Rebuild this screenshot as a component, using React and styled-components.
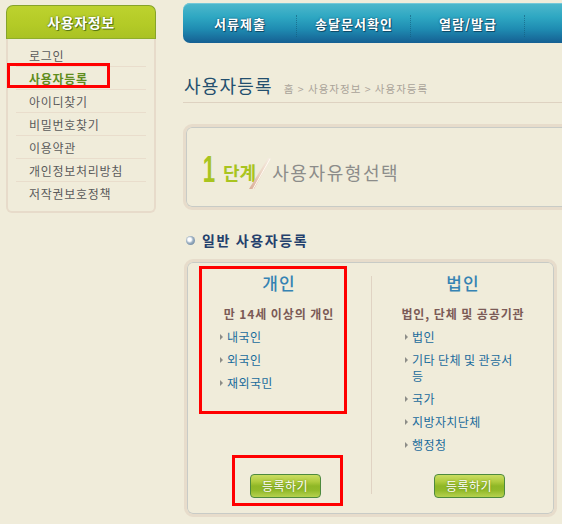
import React from "react";
import styled, { createGlobalStyle } from "styled-components";

const GlobalStyle = createGlobalStyle`
  html, body {
    margin: 0;
    padding: 0;
    background: #f0ecda;
    overflow: hidden;
  }
  body {
    font-family: "Noto Sans CJK KR", "Noto Sans", sans-serif;
    width: 562px;
    height: 524px;
  }
  ul {
    list-style: none;
    margin: 0;
    padding: 0;
  }
`;

const menu = [
  "로그인",
  "사용자등록",
  "아이디찾기",
  "비밀번호찾기",
  "이용약관",
  "개인정보처리방침",
  "저작권보호정책",
];

// the last tab runs past the right edge, only its separator shows
const tabs = ["서류제출", "송달문서확인", "열람/발급", ""];

const kinds = [
  {
    title: "개인",
    sub: "만 14세 이상의 개인",
    items: ["내국인", "외국인", "재외국민"],
    marked: true,
  },
  {
    title: "법인",
    sub: "법인, 단체 및 공공기관",
    items: ["법인", "기타 단체 및 관공서 등", "국가", "지방자치단체", "행정청"],
  },
];

const App = () => {
  return (
    <>
      <GlobalStyle />
      <Page>
        <Sidebar>
          <SideHeader>사용자정보</SideHeader>
          <SideBody>
            {menu.map((m) => (
              <SideItem key={m} $active={m === "사용자등록"}>
                {m}
                {m === "사용자등록" && (
                  <Mark $top={-4} $left={-9} $w={103} $h={25} />
                )}
              </SideItem>
            ))}
          </SideBody>
        </Sidebar>

        <Main>
          <Nav>
            {tabs.map((t, i) => (
              <Tab key={i}>{t}</Tab>
            ))}
          </Nav>

          <TitleRow>
            <Title>사용자등록</Title>
            <Crumb>홈 &gt; 사용자정보 &gt; 사용자등록</Crumb>
          </TitleRow>

          <StepBox>
            <StepNo>1</StepNo>
            <StepWord>단계</StepWord>
            <Slash width="24" height="34" viewBox="0 0 24 34">
              <defs>
                <linearGradient id="sl" x1="0" y1="1" x2="1" y2="0">
                  <stop offset="0" stopColor="#d9ad98" />
                  <stop offset="0.55" stopColor="#ecd6c6" />
                  <stop offset="1" stopColor="#f6efe4" />
                </linearGradient>
              </defs>
              <polygon points="1,33 20,2 23,2 6,33" fill="url(#sl)" />
              <line x1="5" y1="33" x2="22" y2="3" stroke="#fffaf2" strokeWidth="1" />
            </Slash>
            <StepText>사용자유형선택</StepText>
          </StepBox>

          <SectionHead>
            <Dot />
            일반 사용자등록
          </SectionHead>

          <Card>
            {kinds.map((k, i) => (
              <React.Fragment key={k.title}>
                {i > 0 && <Divider />}
                <Column>
                  <KindTitle>{k.title}</KindTitle>
                  <KindSub>{k.sub}</KindSub>
                  <KindList>
                    {k.items.map((it) => (
                      <KindItem key={it}>
                        <span>{it}</span>
                      </KindItem>
                    ))}
                  </KindList>
                  <ButtonRow>
                    <RegButton>등록하기</RegButton>
                  </ButtonRow>
                  {k.marked && (
                    <>
                      <Mark $top={4} $left={12} $w={148} $h={148} />
                      <Mark $top={193} $left={45} $w={111} $h={51} />
                    </>
                  )}
                </Column>
              </React.Fragment>
            ))}
          </Card>
        </Main>
      </Page>
    </>
  );
};

export default App;

const Page = styled.div`
  display: flex;
  align-items: flex-start;
  padding: 3px 0 0 6px;
`;

const Sidebar = styled.div`
  width: 150px;
  margin-top: 2px;
  flex-shrink: 0;
`;

const SideHeader = styled.div`
  height: 34px;
  box-sizing: border-box;
  border: 1px solid #86a32a;
  border-bottom-color: #8fae2a;
  border-radius: 7px 7px 0 0;
  background: linear-gradient(#bdd22e, #b3ca26 60%, #aac224);
  color: #fff;
  font-size: 14px;
  font-weight: 700;
  letter-spacing: 0.6px;
  display: flex;
  align-items: center;
  justify-content: center;
  text-shadow: 0 0 2px #4d6a10, 1px 1px 0 #5f7e14;
`;

const SideBody = styled.ul`
  && {
    border: 2px solid #e7dbca;
    border-top: none;
    border-radius: 0 0 6px 6px;
    padding: 5px 8px 6px;
  }
`;

const SideItem = styled.li`
  position: relative;
  height: 23px;
  box-sizing: border-box;
  padding-left: 13px;
  border-bottom: 1px solid #e9ddcc;
  font-size: 12px;
  line-height: 23px;
  color: ${(p) => (p.$active ? "#5f8c1c" : "#5a5a5a")};
  font-weight: ${(p) => (p.$active ? 700 : 400)};
  letter-spacing: 0.7px;
  &:last-child {
    border-bottom: none;
  }
`;

const Mark = styled.div`
  position: absolute;
  top: ${(p) => p.$top}px;
  left: ${(p) => p.$left}px;
  width: ${(p) => p.$w}px;
  height: ${(p) => p.$h}px;
  box-sizing: border-box;
  border: 3px solid #ff0000;
  pointer-events: none;
`;

const Main = styled.div`
  margin-left: 27px;
  width: 400px;
  flex-shrink: 0;
  display: flex;
  flex-direction: column;
`;

const Nav = styled.div`
  height: 40px;
  display: flex;
  border-radius: 7px 0 0 7px;
  background: linear-gradient(#4fb8cc 0%, #2ea7c2 35%, #1f8cb2 65%, #155f92 100%);
  box-shadow: inset 0 1px 0 #74c8d8;
`;

const Tab = styled.div`
  width: 114px;
  flex-shrink: 0;
  display: flex;
  align-items: center;
  justify-content: center;
  color: #fff;
  font-size: 13px;
  font-weight: 700;
  letter-spacing: 1px;
  text-shadow: 0 0 2px #0c4764, 1px 1px 0 #12506e;
  position: relative;
  &:not(:last-child)::after {
    content: "";
    position: absolute;
    right: 0;
    top: 12px;
    bottom: 6px;
    border-right: 1px dotted rgba(20, 90, 120, 0.6);
  }
`;

const TitleRow = styled.div`
  margin-top: 29px;
  padding: 0 0 4px 1px;
  border-bottom: 1px solid #ded2c1;
  display: flex;
  align-items: baseline;
`;

const Title = styled.h1`
  margin: 0;
  font-size: 18px;
  line-height: 26px;
  font-weight: 400;
  color: #234f6e;
  letter-spacing: 1.2px;
`;

const Crumb = styled.span`
  margin-left: 11px;
  font-size: 10.5px;
  letter-spacing: 1px;
  color: #aaa399;
`;

const StepBox = styled.div`
  margin-top: 21px;
  height: 86px;
  box-sizing: border-box;
  border: 3px solid #e7dccb;
  border-radius: 9px;
  box-shadow: inset 0 0 0 1px #c8cbc6;
  display: flex;
  align-items: center;
  padding: 6px 0 0 13px;
`;

const StepNo = styled.span`
  font-family: "Liberation Sans", sans-serif;
  font-weight: 700;
  font-size: 36px;
  line-height: 36px;
  color: #a9c41f;
  display: inline-block;
  transform: scaleX(0.62);
  margin-right: 4px;
`;

const StepWord = styled.span`
  font-size: 18px;
  font-weight: 700;
  color: #a9c41f;
  margin-top: 4px;
`;

const Slash = styled.svg`
  margin: 6px 0 0 -8px;
  flex-shrink: 0;
`;

const StepText = styled.span`
  font-size: 18px;
  color: #8c8c8a;
  letter-spacing: 1.6px;
  margin-top: 4px;
`;

const SectionHead = styled.h2`
  margin: 20px 0 0;
  padding-left: 3px;
  height: 20px;
  display: flex;
  align-items: center;
  gap: 7px;
  font-size: 14px;
  font-weight: 600;
  letter-spacing: 1.6px;
  color: #23406c;
`;

const Dot = styled.span`
  width: 9px;
  height: 9px;
  border-radius: 50%;
  background: radial-gradient(circle at 40% 40%, #ffffff 0 22%, #9fb2c4 45%, #4f6d8c 100%);
  flex-shrink: 0;
`;

const Card = styled.div`
  margin-top: 9px;
  margin-left: 1px;
  width: 373px;
  height: 258px;
  box-sizing: border-box;
  border: 3px solid #e7dccb;
  border-radius: 9px;
  box-shadow: inset 0 0 0 1px #c8cbc6;
  display: grid;
  grid-template-columns: 184px 1px 1fr;
`;

const Divider = styled.div`
  background: #e0d3c3;
  margin: 14px 0 22px;
`;

const Column = styled.div`
  position: relative;
  display: flex;
  flex-direction: column;
  align-items: center;
  padding: 9px 0 18px;
`;

const KindTitle = styled.h3`
  margin: 0;
  font-size: 17px;
  line-height: 24px;
  font-weight: 500;
  letter-spacing: 1px;
  color: #3683b3;
`;

const KindSub = styled.div`
  margin-top: 10px;
  font-size: 12px;
  line-height: 18px;
  font-weight: 700;
  letter-spacing: 0.9px;
  color: #7b5a56;
`;

const KindList = styled.ul`
  && {
    margin-top: 6px;
    align-self: stretch;
    padding-left: 33px;
  }
`;

const KindItem = styled.li`
  position: relative;
  padding-left: 7px;
  margin-bottom: 7px;
  font-size: 12px;
  line-height: 16px;
  letter-spacing: 0.4px;
  color: #1a6b9c;
  &::before {
    content: "";
    position: absolute;
    left: 0;
    top: 5px;
    border-left: 3px solid #8d8d88;
    border-top: 3px solid transparent;
    border-bottom: 3px solid transparent;
  }
  & span {
    display: block;
    max-width: 112px;
  }
  &:last-child {
    margin-bottom: 0;
  }
`;

const ButtonRow = styled.div`
  margin-top: auto;
  padding: 19px 0 0 12px;
`;

const RegButton = styled.button`
  width: 71px;
  height: 24px;
  padding: 0;
  border: 1px solid #4d8a3e;
  border-radius: 4px;
  background: linear-gradient(
    #cadd62 0%,
    #b0cc3e 30%,
    #8fb726 50%,
    #92ba2a 70%,
    #b6d14e 100%
  );
  color: #fff;
  font-family: "Noto Sans CJK KR", sans-serif;
  font-size: 12px;
  letter-spacing: 0.5px;
  text-shadow: 0 0 2px #6a8a1e;
  cursor: pointer;
`;
